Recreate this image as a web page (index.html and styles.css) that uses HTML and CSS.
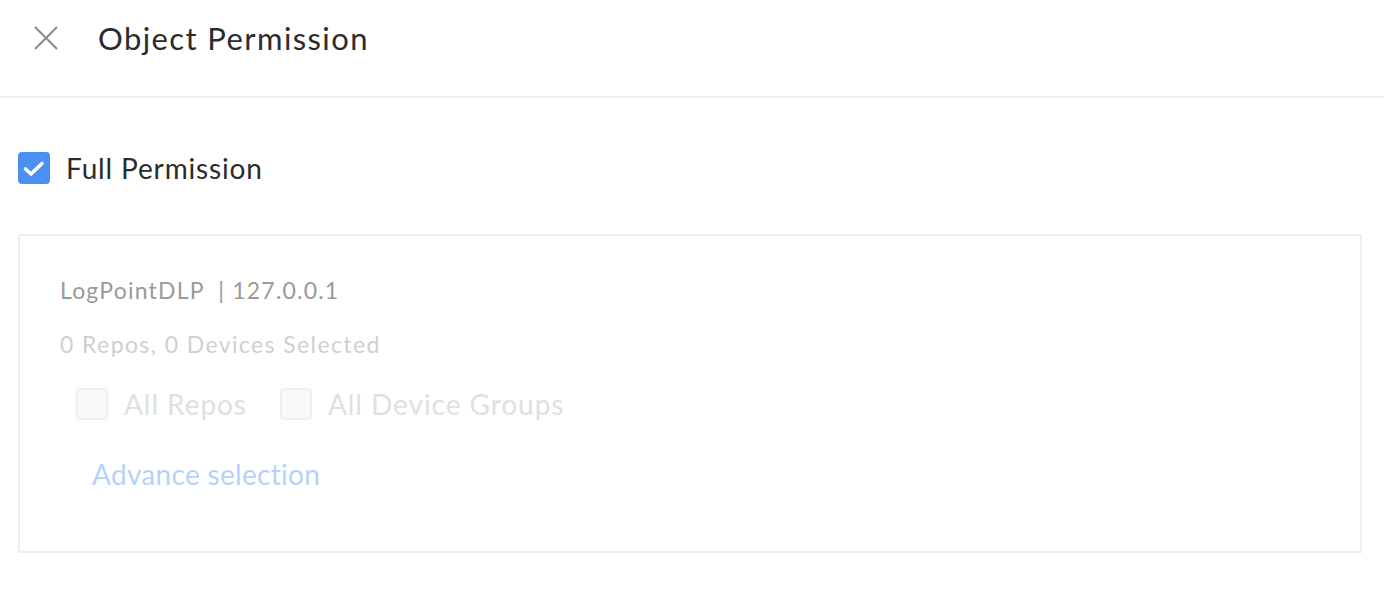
FILE: index.html
```html
<!DOCTYPE html>
<html lang="en">
<head>
    <meta charset="UTF-8">
    <title>Object Permission</title>
    <link rel="stylesheet" href="styles.css">
</head>
<body>
    <div class="header">
        <div class="header-row">
            <span class="close">
                <svg width="24" height="24" viewBox="0 0 24 24">
                    <path d="M1 1 L23 23 M23 1 L1 23" stroke="#8a8a8a" stroke-width="2" fill="none"/>
                </svg>
            </span>
            <h1 class="title">Object Permission</h1>
        </div>
    </div>

    <div class="content">
        <label class="full">
            <span class="check checked">
                <svg width="32" height="32" viewBox="0 0 32 32">
                    <path d="M7.5 17 L13 22 L24 11.5" stroke="#fff" stroke-width="3.6" fill="none" stroke-linecap="round" stroke-linejoin="round"/>
                </svg>
            </span>
            Full Permission
        </label>

        <div class="box">
            <div class="source">LogPointDLP &nbsp;| 127.0.0.1</div>
            <div class="count">0 Repos, 0 Devices Selected</div>
            <div class="options">
                <label class="opt"><span class="check disabled"></span>All Repos</label>
                <label class="opt"><span class="check disabled"></span>All Device Groups</label>
            </div>
            <a class="advance" href="#">Advance selection</a>
        </div>
    </div>
</body>
</html>
```

FILE: styles.css
```css
body {
    margin: 0;
    font-family: Lato, "Open Sans", sans-serif;
    background: #fff;
    color: #2b2b2b;
}

.header {
    height: 96px;
    border-bottom: 2px solid #efefef;
    padding-left: 34px;
}

.header-row {
    height: 76px;
    display: flex;
    align-items: center;
}

.close {
    width: 24px;
    height: 24px;
    display: flex;
    margin-right: 40px;
}

.title {
    margin: 0;
    font-size: 31px;
    font-weight: 400;
    letter-spacing: 1.4px;
}

.content {
    padding: 53px 22px 0 18px;
}

.full {
    display: flex;
    align-items: center;
    font-size: 28px;
    letter-spacing: 0.85px;
}

.check {
    width: 32px;
    height: 32px;
    box-sizing: border-box;
    border-radius: 4px;
    display: flex;
    align-items: center;
    justify-content: center;
    flex-shrink: 0;
}

.check.checked {
    background: #4a8ff2;
    margin-right: 16px;
}

.check.disabled {
    border: 2px solid #f0f0f0;
    background: #fafafa;
    margin-right: 16px;
}

.box {
    margin-top: 49px;
    border: 2px solid #efefef;
    height: 319px;
    box-sizing: border-box;
    padding: 39px 40px 0 40px;
}

.source {
    font-size: 23px;
    color: #9a9a9a;
    line-height: 30px;
    letter-spacing: 1.2px;
}

.count {
    margin-top: 24px;
    font-size: 23px;
    color: #cfcfcf;
    line-height: 30px;
    letter-spacing: 1.4px;
}

.options {
    display: flex;
    gap: 33px;
    margin-top: 28px;
    padding-left: 16px;
}

.opt {
    display: flex;
    align-items: center;
    font-size: 28px;
    color: #e0e0e0;
    letter-spacing: 0.95px;
}

.advance {
    display: inline-block;
    margin-top: 36px;
    margin-left: 32px;
    font-size: 28px;
    color: #b5d3fa;
    text-decoration: none;
    letter-spacing: 0.3px;
}
```
